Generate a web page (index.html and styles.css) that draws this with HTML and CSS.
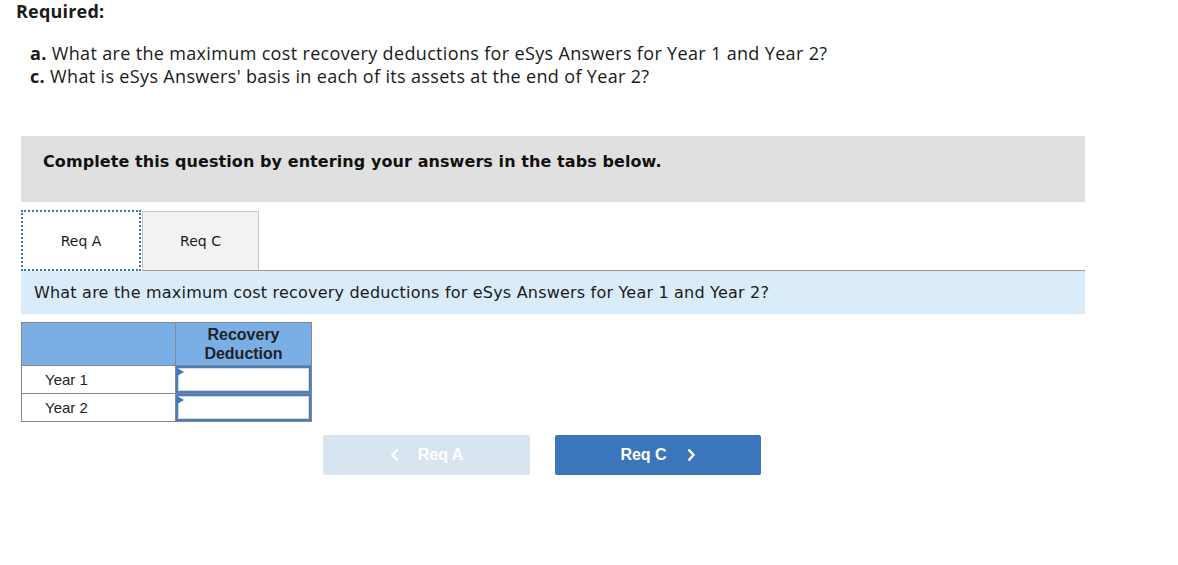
FILE: index.html
```html
<!DOCTYPE html>
<html>
<head>
  <title>Required</title>
  <link rel="stylesheet" href="styles.css">
</head>
<body>
  <div class="page">
    <h2 class="required">Required:</h2>
    <div class="parts">
      <p><b>a.</b> What are the maximum cost recovery deductions for eSys Answers for Year 1 and Year 2?</p>
      <p><b>c.</b> What is eSys Answers' basis in each of its assets at the end of Year 2?</p>
    </div>

    <div class="intro">Complete this question by entering your answers in the tabs below.</div>

    <div class="tabs">
      <div class="tab active">Req A</div>
      <div class="tab">Req C</div>
      <div class="tab-rest"></div>
    </div>
    <div class="question">What are the maximum cost recovery deductions for eSys Answers for Year 1 and Year 2?</div>

    <table class="grid">
      <tr>
        <th class="label-col"></th>
        <th class="value-col">Recovery<br>Deduction</th>
      </tr>
      <tr>
        <td class="label">Year 1</td>
        <td class="cell"><input type="text" class="entry"><span class="flag"></span></td>
      </tr>
      <tr>
        <td class="label">Year 2</td>
        <td class="cell"><input type="text" class="entry"><span class="flag"></span></td>
      </tr>
    </table>

    <div class="nav">
      <button class="navbtn prev">
        <svg class="chev left" width="10" height="14" viewBox="0 0 10 14"><path d="M7.5 1.5 L2.5 7 L7.5 12.5" fill="none" stroke="#fff" stroke-width="2.4"/></svg>
        Req A
      </button>
      <button class="navbtn next">
        Req C
        <svg class="chev right" width="10" height="14" viewBox="0 0 10 14"><path d="M2.5 1.5 L7.5 7 L2.5 12.5" fill="none" stroke="#fff" stroke-width="2.4"/></svg>
      </button>
    </div>
  </div>
</body>
</html>
```

FILE: styles.css
```css
body {
  margin: 0;
  font-family: "Open Sans", Arial, sans-serif;
  color: #1a1a1a;
  background-color: #fff;
}

.page {
  width: 1064px;
  padding-left: 21px;
}

.required {
  margin: 0 0 0 -5px;
  font-size: 18px;
  line-height: 22px;
  font-weight: 700;
  letter-spacing: 0.2px;
}

.parts {
  margin-top: 20px;
  padding-left: 9px;
}

.parts p {
  margin: 0;
  font-size: 18px;
  line-height: 23px;
  letter-spacing: 0.34px;
}

.intro {
  box-sizing: border-box;
  margin-top: 48px;
  height: 66px;
  padding: 16px 0 0 22px;
  background-color: #e0e0e0;
  font-family: "DejaVu Sans", Verdana, sans-serif;
  font-size: 16px;
  line-height: 20px;
  font-weight: bold;
  letter-spacing: 0.08px;
  color: #111;
}

.tabs {
  margin-top: 8px;
  display: flex;
  align-items: flex-end;
  height: 61px;
}

.tab {
  box-sizing: border-box;
  width: 117px;
  height: 60px;
  display: flex;
  align-items: center;
  justify-content: center;
  background-color: #f2f2f2;
  border: 1px solid #c6c6c6;
  border-bottom: 1px solid #999;
  font-family: "DejaVu Sans", Verdana, sans-serif;
  font-size: 14px;
  color: #1a1a1a;
}

.tab.active {
  width: 120px;
  height: 61px;
  margin-right: 1px;
  background-color: #fff;
  border: 2px dotted #3a76b9;
  padding-top: 1px;
}

.tab-rest {
  flex: 1;
  border-bottom: 1px solid #999;
}

.question {
  box-sizing: border-box;
  height: 43px;
  padding-left: 13px;
  display: flex;
  align-items: center;
  background-color: #daebf9;
  font-family: "DejaVu Sans", Verdana, sans-serif;
  font-size: 16px;
  letter-spacing: 0.2px;
  color: #1a1a1a;
}

.grid {
  margin-top: 8px;
  border-collapse: collapse;
  font-family: "Liberation Sans", Arial, sans-serif;
  font-size: 15px;
  color: #222;
}

.grid th {
  height: 42px;
  padding: 0;
  background-color: #7aaee6;
  border: 1px solid #888;
  font-size: 16px;
  font-weight: bold;
  line-height: 19px;
}

.label-col {
  width: 153px;
}

.value-col {
  width: 135px;
}

.grid td {
  height: 27px;
  padding: 0;
  border: 1px solid #888;
}

.label {
  padding-left: 23px !important;
}

.cell {
  position: relative;
}

.entry {
  display: block;
  box-sizing: border-box;
  width: 135px;
  height: 27px;
  margin: 0;
  border: 2px solid #4a7ebb;
  box-shadow: inset 0 0 0 1px #c9dcf1;
  outline: none;
}

.flag {
  position: absolute;
  left: 1px;
  top: 2px;
  width: 0;
  height: 0;
  border-top: 4px solid transparent;
  border-bottom: 4px solid transparent;
  border-left: 7px solid #3a76b9;
}

.nav {
  margin-top: 13px;
  padding-left: 302px;
  display: flex;
  gap: 25px;
}

.navbtn {
  width: 207px;
  height: 40px;
  display: flex;
  align-items: center;
  justify-content: center;
  border: none;
  border-radius: 2px;
  font-family: "Liberation Sans", Arial, sans-serif;
  font-size: 16px;
  font-weight: bold;
  color: #fff;
  cursor: pointer;
}

.chev.left {
  margin-right: 18px;
}

.chev.right {
  margin-left: 19px;
}

.prev {
  background-color: #d9e4f1;
}

.next {
  width: 206px;
  background-color: #3a76b9;
}
```
